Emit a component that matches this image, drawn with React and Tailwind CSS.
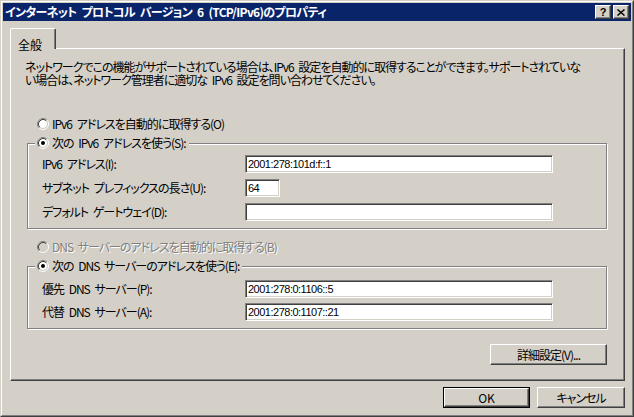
import React from "react";

const Radio = ({ checked, disabled }) => (
  <svg width="12" height="12" viewBox="0 0 12 12" className="shrink-0">
    <circle cx="6" cy="6" r="4" fill={disabled ? "#d4d0c8" : "#ffffff"} />
    <path d="M2.11 9.89A5.5 5.5 0 0 1 9.89 2.11" stroke="#808080" fill="none" />
    <path d="M9.89 2.11A5.5 5.5 0 0 1 2.11 9.89" stroke="#ffffff" fill="none" />
    <path d="M2.82 9.18A4.5 4.5 0 0 1 9.18 2.82" stroke="#404040" fill="none" />
    <path d="M9.18 2.82A4.5 4.5 0 0 1 2.82 9.18" stroke="#d4d0c8" fill="none" />
    {checked && <circle cx="6" cy="6" r="2" fill="#000000" />}
  </svg>
);

const Field = ({ w, value }) => (
  <div
    className={`h-[18px] ${w} shrink-0 border border-t-[#808080] border-l-[#808080] border-r-white border-b-white bg-white shadow-[inset_1px_1px_0_#404040,inset_-1px_-1px_0_#d4d0c8] flex items-center pl-[2px]`}
  >
    <span className="font-['Liberation_Sans',sans-serif] text-[11px] tracking-[-0.5px] [word-spacing:0px] leading-none text-black">
      {value}
    </span>
  </div>
);

const Raised = ({ className, children }) => (
  <div
    className={`border border-t-white border-l-white border-r-[#404040] border-b-[#404040] shadow-[inset_-1px_-1px_0_#808080] bg-[#d4d0c8] flex items-center justify-center ${className}`}
  >
    {children}
  </div>
);

const Row = ({ label, children }) => (
  <div className="flex items-center h-[18px]">
    <div className="w-[203px] shrink-0 text-[12px] leading-[16px] tracking-[-1px] whitespace-nowrap">{label}</div>
    {children}
  </div>
);

const Legend = ({ children }) => (
  <div className="absolute -top-[9px] left-[7px] h-[16px] pl-[2px] pr-[3px] bg-[#d4d0c8] flex items-center">
    <Radio checked />
    <span className="ml-[3px] text-[12px] leading-[16px] tracking-[-1px] whitespace-nowrap">{children}</span>
  </div>
);

export default function App() {
  return (
    <div className="w-[634px] h-[417px] bg-[#d4d0c8] border border-t-[#d4d0c8] border-l-[#d4d0c8] border-r-[#404040] border-b-[#404040] font-['Noto_Sans_CJK_JP',sans-serif] [font-feature-settings:'palt'] [word-spacing:3px] text-black select-none">
      <div className="h-full border border-t-white border-l-white border-r-[#808080] border-b-[#808080] p-px flex flex-col">
        {/* Title bar */}
        <div className="h-[18px] bg-[#0a246a] flex items-center justify-between pl-[2px] pr-[2px] shrink-0">
          <span className="text-white font-bold text-[12px] leading-[16px] tracking-[-0.7px] whitespace-nowrap">
            インターネット プロトコル バージョン 6 (TCP/IPv6)のプロパティ
          </span>
          <div className="flex gap-[2px]">
            <Raised className="w-[16px] h-[14px]">
              <span className="font-['Liberation_Sans',sans-serif] font-bold text-[11px] leading-none text-black">?</span>
            </Raised>
            <Raised className="w-[16px] h-[14px]">
              <svg width="8" height="7" viewBox="0 0 8 7">
                <path d="M0.5 0.5L7.5 6.5M7.5 0.5L0.5 6.5" stroke="#000" strokeWidth="1.5" />
              </svg>
            </Raised>
          </div>
        </div>

        {/* Body */}
        <div className="flex flex-col pt-[7px] pl-[7px] pr-[6px]">
          {/* Tab */}
          <div className="relative z-10 -mb-px w-[46px] h-[21px] bg-[#d4d0c8] border-t border-l border-r border-t-white border-l-white border-r-[#404040] shadow-[inset_-1px_0_0_#808080] rounded-t-[2px] pl-[7px] pt-[2px]">
            <span className="text-[12px] leading-[16px]">全般</span>
          </div>

          {/* Panel */}
          <div className="w-[615px] h-[333px] border border-t-white border-l-white border-r-[#404040] border-b-[#404040] shadow-[inset_-1px_-1px_0_#808080] flex flex-col">
            <div className="pl-[14px] pt-[11px] text-[12px] leading-[13px] tracking-[-1px] whitespace-nowrap">
              ネットワークでこの機能がサポートされている場合は、IPv6 設定を自動的に取得することができます。サポートされていな
              <br />
              い場合は、ネットワーク管理者に適切な IPv6 設定を問い合わせてください。
            </div>

            <div className="mt-[30px] ml-[26px] h-[16px] flex items-center">
              <Radio />
              <span className="ml-[3px] text-[12px] leading-[16px] tracking-[-1px] whitespace-nowrap">IPv6 アドレスを自動的に取得する(O)</span>
            </div>

            {/* Group 1 */}
            <div className="relative mt-[11px] ml-[16px] w-[580px] border border-[#808080] shadow-[inset_1px_1px_0_#ffffff,1px_1px_0_#ffffff] pt-[11px] pb-[7px] pl-[14px] flex flex-col gap-[6px]">
              <Legend>次の IPv6 アドレスを使う(S):</Legend>
              <Row label="IPv6 アドレス(I):">
                <Field w="w-[308px]" value="2001:278:101d:f::1" />
              </Row>
              <Row label="サブネット プレフィックスの長さ(U):">
                <Field w="w-[35px]" value="64" />
              </Row>
              <Row label="デフォルト ゲートウェイ(D):">
                <Field w="w-[308px]" value="" />
              </Row>
            </div>

            <div className="mt-[10px] ml-[26px] h-[16px] flex items-center">
              <Radio disabled />
              <span className="ml-[3px] text-[12px] leading-[16px] tracking-[-1px] whitespace-nowrap text-[#808080] [text-shadow:1px_1px_0_#ffffff]">
                DNS サーバーのアドレスを自動的に取得する(B)
              </span>
            </div>

            {/* Group 2 */}
            <div className="relative mt-[11px] ml-[16px] w-[580px] border border-[#808080] shadow-[inset_1px_1px_0_#ffffff,1px_1px_0_#ffffff] pt-[13px] pb-[7px] pl-[14px] flex flex-col gap-[5px]">
              <Legend>次の DNS サーバーのアドレスを使う(E):</Legend>
              <Row label="優先 DNS サーバー(P):">
                <Field w="w-[308px]" value="2001:278:0:1106::5" />
              </Row>
              <Row label="代替 DNS サーバー(A):">
                <Field w="w-[308px]" value="2001:278:0:1107::21" />
              </Row>
            </div>

            <div className="mt-[15px] ml-[16px] w-[580px] flex justify-end">
              <Raised className="w-[117px] h-[21px]">
                <span className="text-[12px] leading-[16px] tracking-[-1px]">詳細設定(V)...</span>
              </Raised>
            </div>
          </div>

          {/* Bottom buttons */}
          <div className="mt-[6px] flex justify-end gap-[7px]">
            <div className="w-[87px] h-[21px] border border-black">
              <Raised className="w-full h-full">
                <span className="text-[12px] leading-[16px]">OK</span>
              </Raised>
            </div>
            <Raised className="w-[88px] h-[21px]">
              <span className="text-[12px] leading-[16px] tracking-[-1px]">キャンセル</span>
            </Raised>
          </div>
        </div>
      </div>
    </div>
  );
}
